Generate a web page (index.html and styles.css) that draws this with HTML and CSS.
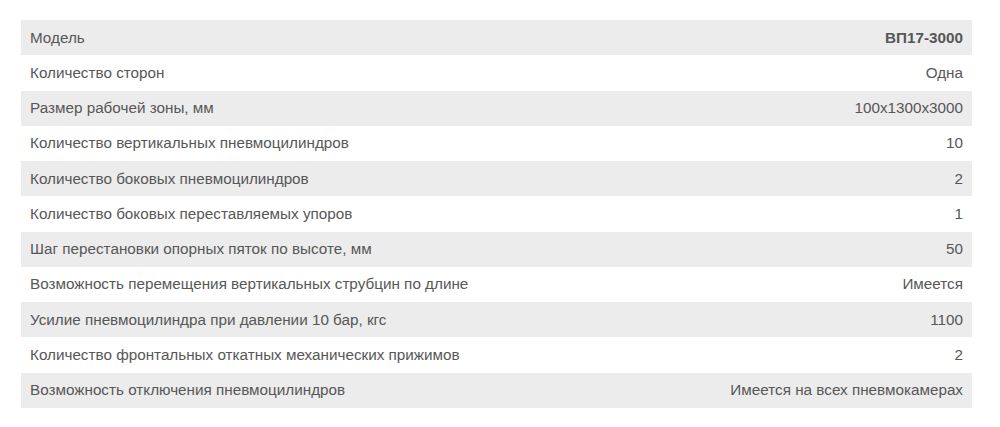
FILE: index.html
```html
<!DOCTYPE html>
<html lang="ru">
<head>
<meta charset="utf-8">
<link rel="stylesheet" href="styles.css">
</head>
<body>
<div class="wrap">
<table class="specs">
<tbody>
<tr><td>Модель</td><td class="val"><b>ВП17-3000</b></td></tr>
<tr><td>Количество сторон</td><td class="val">Одна</td></tr>
<tr><td>Размер рабочей зоны, мм</td><td class="val">100x1300x3000</td></tr>
<tr><td>Количество вертикальных пневмоцилиндров</td><td class="val">10</td></tr>
<tr><td>Количество боковых пневмоцилиндров</td><td class="val">2</td></tr>
<tr><td>Количество боковых переставляемых упоров</td><td class="val">1</td></tr>
<tr><td>Шаг перестановки опорных пяток по высоте, мм</td><td class="val">50</td></tr>
<tr><td>Возможность перемещения вертикальных струбцин по длине</td><td class="val">Имеется</td></tr>
<tr><td>Усилие пневмоцилиндра при давлении 10 бар, кгс</td><td class="val">1100</td></tr>
<tr><td>Количество фронтальных откатных механических прижимов</td><td class="val">2</td></tr>
<tr><td>Возможность отключения пневмоцилиндров</td><td class="val">Имеется на всех пневмокамерах</td></tr>
</tbody>
</table>
</div>
</body>
</html>
```
FILE: styles.css
```css
html, body {
  margin: 0;
  padding: 0;
  background: #fff;
}
.wrap {
  padding: 20px 28px 0 21px;
}
.specs {
  width: 951px;
  border-collapse: collapse;
  font-family: "Liberation Sans", Arial, sans-serif;
  font-size: 15.25px;
  color: #575757;
}
.specs td {
  height: 35.27px;
  padding: 0 9px;
  box-sizing: border-box;
  line-height: 18px;
  vertical-align: middle;
}
.specs tr:nth-child(odd) td {
  background: #ececec;
}
.specs .val {
  text-align: right;
}
.specs b {
  font-weight: bold;
}
```
